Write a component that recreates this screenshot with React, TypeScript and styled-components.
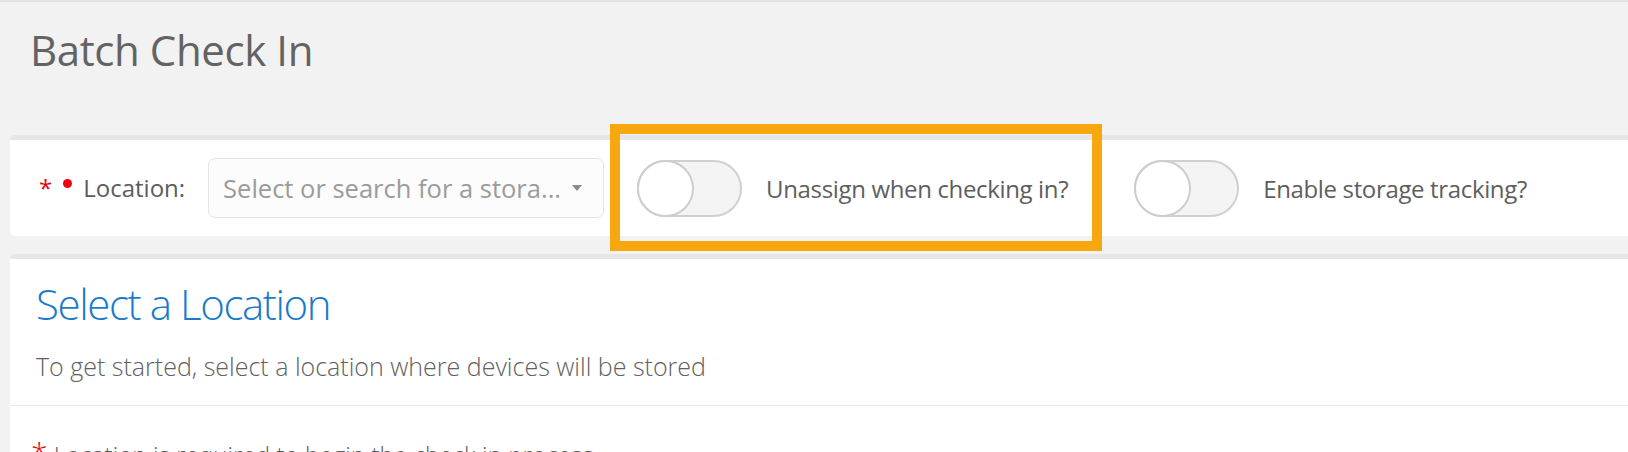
import React from "react";
import styled, { createGlobalStyle } from "styled-components";

const GlobalStyle = createGlobalStyle`
  html, body {
    margin: 0;
    padding: 0;
    background: #f2f2f2;
  }
  body {
    font-family: "Open Sans", "Noto Sans", sans-serif;
    overflow: hidden;
    color: #616161;
  }
  * { box-sizing: border-box; }
`;

const Page = styled.div`
  border-top: 2px solid #e3e3e3;
  min-height: 450px;
`;

const Header = styled.header`
  height: 133px;
  padding: 23px 0 0 30px;
`;

const Title = styled.h1`
  margin: 0;
  font-size: 42px;
  line-height: 50px;
  font-weight: 400;
  letter-spacing: -0.4px;
  color: #636363;
`;

const Card = styled.section`
  margin-left: 10px;
  background: #ffffff;
  border-top: 5px solid #e6e6e6;
  border-radius: 5px 0 0 5px;
`;

const FilterCard = styled(Card)`
  position: relative;
  height: 101px;
  display: flex;
  align-items: center;
  padding-left: 29px;
`;

const Asterisk = styled.span<{ $size?: number }>`
  color: #e8000b;
  font-size: ${(p) => p.$size ?? 24}px;
  line-height: 1;
`;

const Dot = styled.span`
  width: 9px;
  height: 9px;
  border-radius: 50%;
  background: #f00010;
  margin: 0 11px 10px 11px;
`;

const FieldLabel = styled.label`
  font-size: 24px;
  line-height: 1;
  color: #5c5c5c;
  margin-right: 23px;
`;

const SelectBox = styled.div`
  width: 396px;
  height: 60px;
  border: 1px solid #e4e4e4;
  border-radius: 7px;
  background: #fcfcfc;
  display: flex;
  align-items: center;
  padding: 0 21px 0 14px;
  margin-right: 33px;
`;

const Placeholder = styled.span`
  flex: 1;
  font-size: 25.5px;
  color: #9b9b9b;
  white-space: nowrap;
  overflow: hidden;
`;

const Caret = styled.span`
  width: 0;
  height: 0;
  border-left: 5px solid transparent;
  border-right: 5px solid transparent;
  border-top: 6px solid #8a8a8a;
`;

const ToggleGroup = styled.div<{ $offset?: number }>`
  display: flex;
  align-items: center;
  gap: 24px;
  margin-left: ${(p) => p.$offset ?? 0}px;
`;

const Track = styled.span`
  position: relative;
  width: 105px;
  height: 57px;
  border: 2px solid #d0d0d0;
  border-radius: 29px;
  background: #f4f4f4;
  flex-shrink: 0;
`;

const Knob = styled.span`
  position: absolute;
  top: -2px;
  left: -2px;
  width: 57px;
  height: 57px;
  border-radius: 50%;
  border: 2px solid #cdcdcd;
  background: #ffffff;
`;

const ToggleLabel = styled.span`
  font-size: 24px;
  letter-spacing: -0.35px;
  color: #5e5e5e;
  white-space: nowrap;
`;

const Highlight = styled.div`
  position: absolute;
  left: 600px;
  top: -16px;
  width: 492px;
  height: 127px;
  border: 10px solid #f6a80e;
  pointer-events: none;
`;

const ContentCard = styled(Card)`
  margin-top: 18px;
  min-height: 200px;
`;

const SectionHeader = styled.div`
  padding: 20px 26px 21px;
  border-bottom: 1px solid #ebebeb;
`;

const SectionTitle = styled.h2`
  margin: 0;
  font-size: 42px;
  line-height: 50px;
  font-weight: 300;
  letter-spacing: -1.4px;
  color: #1a7bc8;
`;

const Description = styled.p`
  margin: 19px 0 0;
  font-size: 25px;
  line-height: 36px;
  font-weight: 300;
  color: #616161;
`;

const SectionBody = styled.div`
  padding: 31px 21px;
`;

const Notice = styled.p`
  margin: 0;
  font-size: 24px;
  line-height: 36px;
  font-weight: 300;
  letter-spacing: 0.1px;
  color: #5a5a5a;
  display: flex;
  align-items: baseline;
  gap: 6px;
`;

function Toggle({ label, offset }: { label: string; offset?: number }) {
  return (
    <ToggleGroup $offset={offset}>
      <Track role="switch" aria-checked="false">
        <Knob />
      </Track>
      <ToggleLabel>{label}</ToggleLabel>
    </ToggleGroup>
  );
}

export default function App() {
  return (
    <>
      <GlobalStyle />
      <Page>
        <Header>
          <Title>Batch Check In</Title>
        </Header>
        <FilterCard>
          <Asterisk>*</Asterisk>
          <Dot />
          <FieldLabel>Location:</FieldLabel>
          <SelectBox>
            <Placeholder>Select or search for a stora...</Placeholder>
            <Caret />
          </SelectBox>
          <Toggle label="Unassign when checking in?" />
          <Toggle label="Enable storage tracking?" offset={66} />
          <Highlight />
        </FilterCard>
        <ContentCard>
          <SectionHeader>
            <SectionTitle>Select a Location</SectionTitle>
            <Description>To get started, select a location where devices will be stored</Description>
          </SectionHeader>
          <SectionBody>
            <Notice>
              <Asterisk $size={30}>*</Asterisk>
              Location is required to begin the check in process
            </Notice>
          </SectionBody>
        </ContentCard>
      </Page>
    </>
  );
}
